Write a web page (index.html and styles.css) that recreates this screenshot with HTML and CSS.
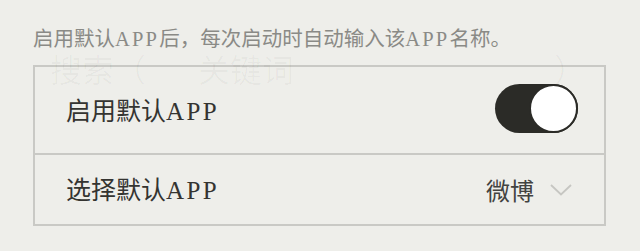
FILE: index.html
```html
<!DOCTYPE html>
<html lang="zh-CN">
<head>
<meta charset="utf-8">
<link rel="stylesheet" href="styles.css">
</head>
<body>
<div class="page">
  <p class="hint">启用默认<span class="latin">APP</span>后，每次启动时自动输入该<span class="latin">APP</span>名称。</p>
  <div class="ghost" aria-hidden="true"><span class="g1">搜索（</span><span class="g2">关键词</span><span class="g3">）</span></div>
  <div class="box">
    <div class="row row-first">
      <span class="label">启用默认<span class="latin">APP</span></span>
      <div class="toggle"><div class="knob"></div></div>
    </div>
    <div class="row row-second">
      <span class="label">选择默认<span class="latin">APP</span></span>
      <div class="select">
        <span class="value">微博</span>
        <svg class="chev" width="22" height="12" viewBox="0 0 22 12"><polyline points="1,1 11,10.5 21,1" fill="none" stroke="#c6c6c2" stroke-width="1.8"/></svg>
      </div>
    </div>
  </div>
</div>
</body>
</html>
```

FILE: styles.css
```css
html, body {
  margin: 0;
  padding: 0;
  background: #eeeeea;
}
.page {
  position: relative;
  width: 640px;
  height: 251px;
  box-sizing: border-box;
  padding: 24px 34px 0 33px;
  font-family: "Noto Sans CJK SC", "Liberation Serif", serif;
  overflow: hidden;
}
.latin {
  font-family: "Liberation Serif", serif;
}
.hint {
  margin: 0 0 15px 0;
  height: 26px;
  font-size: 20.5px;
  line-height: 26px;
  color: #8a8a86;
  white-space: nowrap;
}
.hint .latin {
  letter-spacing: 2.2px;
}
.ghost {
  position: absolute;
  left: 50px;
  top: 52px;
  width: 540px;
  font-size: 32px;
  line-height: 32px;
  color: rgba(0, 0, 0, 0.03);
  white-space: nowrap;
  pointer-events: none;
}
.ghost .g2 {
  margin-left: 52px;
}
.ghost .g3 {
  position: absolute;
  right: 4px;
  top: 0;
}
.box {
  border: 2px solid #c9c9c5;
  display: flex;
  flex-direction: column;
}
.row {
  display: flex;
  align-items: center;
  justify-content: space-between;
  padding: 0 26px 0 31px;
}
.row-first {
  height: 86px;
  border-bottom: 2px solid #c9c9c5;
}
.row-second {
  height: 69px;
  padding-right: 32px;
}
.label {
  font-size: 25px;
  line-height: 30px;
  color: #343431;
  white-space: nowrap;
}
.label .latin {
  letter-spacing: 2.4px;
}
.toggle {
  width: 83px;
  height: 49px;
  border-radius: 25px;
  background: #2b2b27;
  display: flex;
  justify-content: flex-end;
  align-items: center;
  margin-top: -3px;
}
.knob {
  width: 45px;
  height: 45px;
  border-radius: 50%;
  background: #ffffff;
  border: 2px solid #2b2b27;
}
.select {
  display: flex;
  align-items: center;
  gap: 16px;
}
.value {
  font-size: 24px;
  line-height: 30px;
  color: #424240;
}
.chev {
  display: block;
  margin-top: 1px;
}
```
